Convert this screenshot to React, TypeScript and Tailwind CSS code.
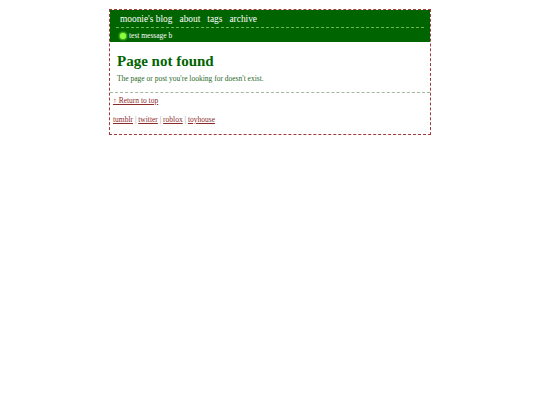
const NAV = ["moonie's blog", "about", "tags", "archive"];
const LINKS = ["tumblr", "twitter", "roblox", "toyhouse"];

export default function App() {
  return (
    <div className="min-h-[405px] bg-white pt-[9px] font-['Liberation_Serif',serif]">
      <div className="mx-auto w-[322px] border border-dashed border-[#a33a3a]">
        <header className="bg-[#006400] px-[6px]">
          <nav className="flex h-[18px] items-center gap-[7px] border-b border-dashed border-[#6cb84a] pl-[4px] pt-[2px] text-[9.4px] text-white">
            {NAV.map((item) => (
              <a key={item} href="#" className="leading-none">
                {item}
              </a>
            ))}
          </nav>
          <div className="flex h-[14px] items-center gap-[3px] pl-[4px] pt-[2px] text-[7.5px] text-white">
            <span className="h-[6px] w-[6px] rounded-full bg-[#8cff3c] shadow-[0_0_2px_1px_#5fd12a]" />
            <span className="leading-none">test message b</span>
          </div>
        </header>

        <main className="border-b border-dashed border-[#9cbc9c] px-[7px] pb-[9px] pt-[11px]">
          <h1 className="text-[15px] font-bold leading-[17px] text-[#006400]">
            Page not found
          </h1>
          <p className="mt-[4px] text-[7.5px] leading-[9px] text-[#1f6b1f]">
            The page or post you're looking for doesn't exist.
          </p>
        </main>

        <footer className="px-[3px] pb-[10px] pt-[3px] text-[7.5px] leading-[9px]">
          <a href="#" className="text-[#8b2a2a] underline">
            ↑ Return to top
          </a>
          <div className="mt-[10px] text-[#8a9a8a]">
            {LINKS.map((link, i) => (
              <span key={link}>
                {i > 0 && " | "}
                <a href="#" className="text-[#8b2a2a] underline">
                  {link}
                </a>
              </span>
            ))}
          </div>
        </footer>
      </div>
    </div>
  );
}
